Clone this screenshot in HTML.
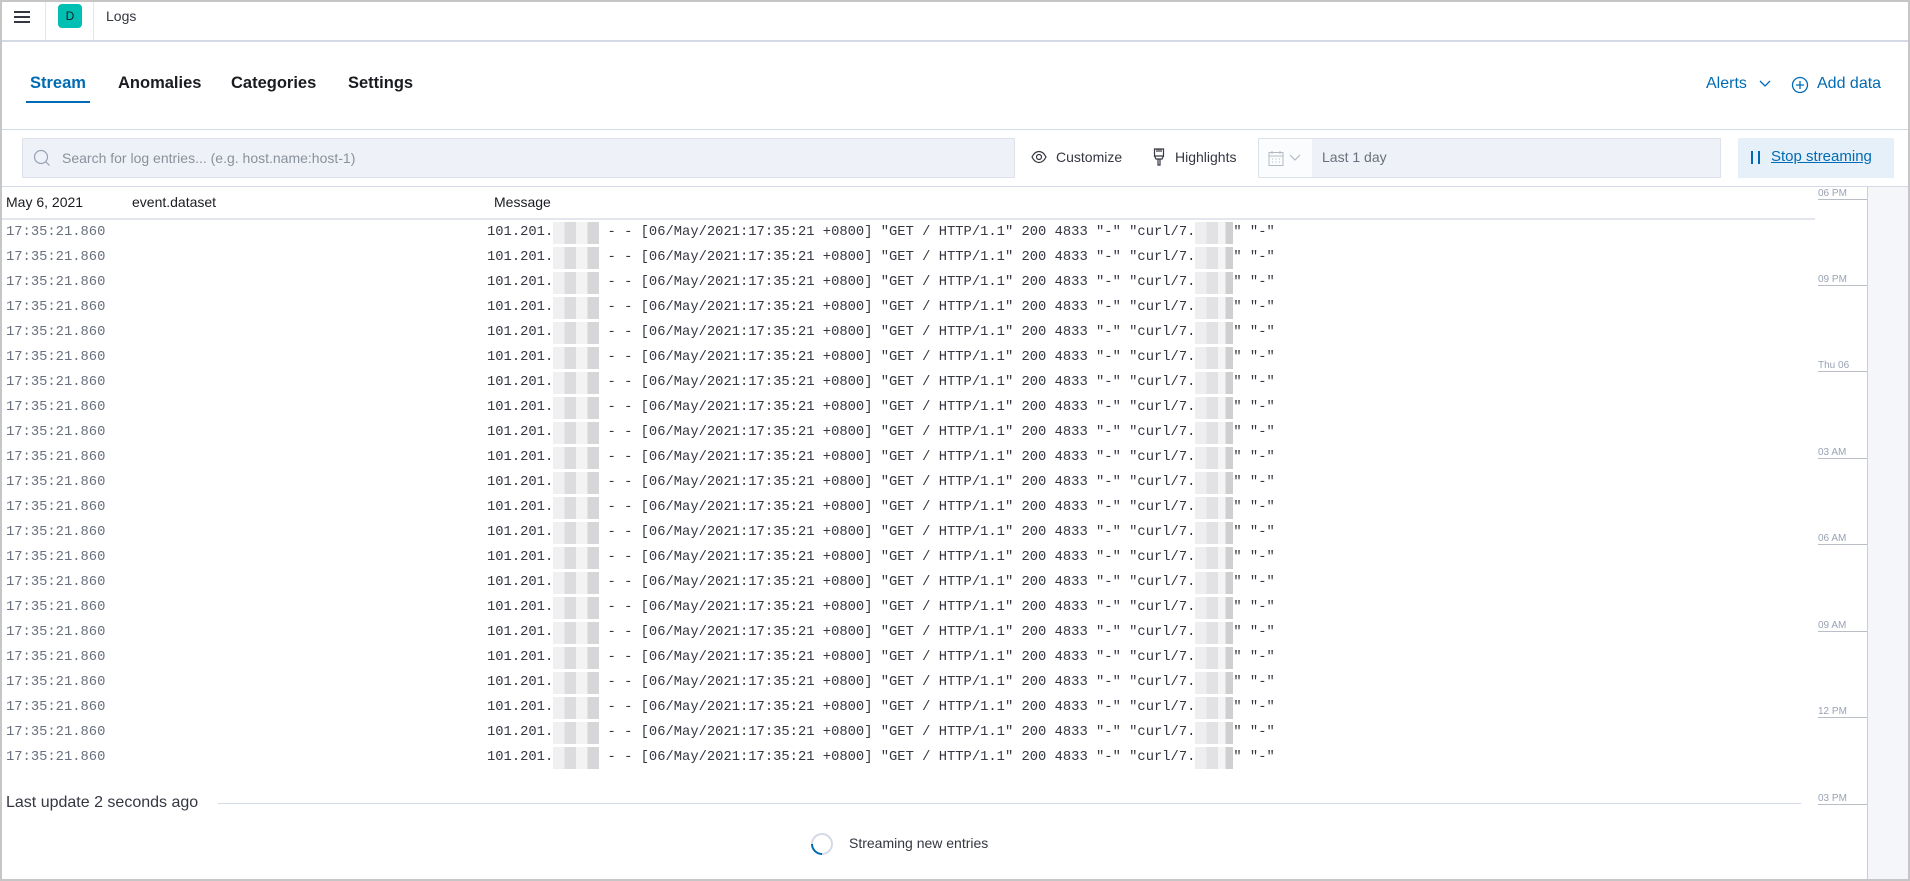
<!DOCTYPE html>
<html><head><meta charset="utf-8"><style>
*{box-sizing:border-box;margin:0;padding:0}
body{width:1910px;height:881px;overflow:hidden;background:#fff;font-family:"Liberation Sans",sans-serif;color:#343741;position:relative}
.a{position:absolute;white-space:nowrap}
.frame{position:absolute;left:0;top:0;width:1910px;height:881px;border:2px solid #c6c6c6;pointer-events:none;z-index:10}
.tab{font-size:16.5px;top:74px;color:#1a1c21}
.row{position:absolute;left:0;height:25px;font-family:"Liberation Mono",monospace;font-size:13.8px;line-height:25px}
.ts{position:absolute;left:6px;color:#69707d}
.msg{position:absolute;left:487px;color:#343741;white-space:pre}
.b1,.b2{display:inline-block;height:22px;margin-top:2px;vertical-align:top}
.b1{width:46px;background:linear-gradient(90deg,#f0f0f2 0 25%,#dcdcdf 25% 50%,#f3f3f4 50% 75%,#d6d6d9 75%)}
.b2{width:38px;background:linear-gradient(90deg,#eeeef0 0 30%,#e2e2e4 30% 60%,#f4f4f5 60% 80%,#cfcfd2 80%)}
.tl{position:absolute;left:1818px;font-size:10px;color:#98a2b3}
.tll{position:absolute;left:1818px;width:49px;height:1px;background:#b9bdc6}
</style></head><body>
<div class="frame"></div>
<svg class="a" style="left:13px;top:9px" width="18" height="16" viewBox="0 0 18 16"><path d="M1 3h16M1 8h16M1 13h16" stroke="#343741" stroke-width="2"/></svg>
<div class="a" style="left:45px;top:2px;width:1px;height:38px;background:#e3e6eb"></div>
<div class="a" style="left:58px;top:4px;width:24px;height:24px;border-radius:4px;background:#00bfb3;color:#1a1c21;font-size:12px;text-align:center;line-height:24px">D</div>
<div class="a" style="left:93px;top:2px;width:1px;height:38px;background:#e3e6eb"></div>
<div class="a" style="left:106px;top:8px;font-size:14px;color:#343741">Logs</div>
<div class="a" style="left:0;top:40px;width:1910px;height:2px;background:#d3dae6"></div>
<div class="a tab" style="left:30px;color:#006bb4;font-weight:bold">Stream</div>
<div class="a" style="left:26px;top:101px;width:64px;height:2px;background:#006bb4"></div>
<div class="a tab" style="left:118px;font-weight:bold">Anomalies</div>
<div class="a tab" style="left:231px;font-weight:bold">Categories</div>
<div class="a tab" style="left:348px;font-weight:bold">Settings</div>
<div class="a" style="left:1706px;top:75px;font-size:16px;color:#006bb4">Alerts</div>
<svg class="a" style="left:1759px;top:80px" width="12" height="8" viewBox="0 0 12 8"><path d="M1 1l5 5 5-5" stroke="#006bb4" fill="none" stroke-width="1.3"/></svg>
<svg class="a" style="left:1791px;top:76px" width="18" height="18" viewBox="0 0 18 18"><circle cx="9" cy="9" r="7.5" stroke="#006bb4" fill="none" stroke-width="1.3"/><path d="M9 5v8M5 9h8" stroke="#006bb4" stroke-width="1.3"/></svg>
<div class="a" style="left:1817px;top:75px;font-size:16px;color:#006bb4">Add data</div>
<div class="a" style="left:0;top:129px;width:1910px;height:1px;background:#d3dae6"></div>
<div class="a" style="left:22px;top:138px;width:993px;height:40px;background:#eef1f7;border:1px solid #dde2ea"></div>
<svg class="a" style="left:33px;top:149px" width="18" height="18" viewBox="0 0 18 18"><circle cx="8" cy="8" r="6.5" stroke="#98a2b3" fill="none" stroke-width="1.2"/><path d="M12.5 12.5l4 4" stroke="#98a2b3" stroke-width="1.2"/></svg>
<div class="a" style="left:62px;top:150px;font-size:14px;color:#8a919c">Search for log entries... (e.g. host.name:host-1)</div>
<svg class="a" style="left:1031px;top:150px" width="16" height="14" viewBox="0 0 16 14"><path d="M1 7C3 3 5.5 1.5 8 1.5S13 3 15 7C13 11 10.5 12.5 8 12.5S3 11 1 7z" stroke="#343741" fill="none" stroke-width="1.2"/><circle cx="8" cy="7" r="2.5" stroke="#343741" fill="none" stroke-width="1.2"/></svg>
<div class="a" style="left:1056px;top:149px;font-size:14px">Customize</div>
<svg class="a" style="left:1153px;top:148px" width="12" height="18" viewBox="0 0 12 18"><path d="M1.5 1h9v7h-9zM4 1v3M6 1v3M8 1v3M1.5 8l1.5 3h6l1.5-3M5 11v6h2v-6" stroke="#343741" fill="none" stroke-width="1.2"/></svg>
<div class="a" style="left:1175px;top:149px;font-size:14px">Highlights</div>
<div class="a" style="left:1258px;top:138px;width:463px;height:40px;background:#eef1f7;border:1px solid #dde2ea"></div>
<div class="a" style="left:1259px;top:139px;width:53px;height:38px;background:#fbfcfd"></div>
<svg class="a" style="left:1268px;top:150px" width="16" height="17" viewBox="0 0 16 17"><rect x="1" y="2.5" width="14" height="13" stroke="#b4bac3" fill="none"/><path d="M1 6h14M4 1v3M12 1v3" stroke="#b4bac3"/><path d="M4 9h1M7.5 9h1M11 9h1M4 12h1M7.5 12h1M11 12h1" stroke="#b4bac3"/></svg>
<svg class="a" style="left:1289px;top:154px" width="12" height="8" viewBox="0 0 12 8"><path d="M1 1l5 5 5-5" stroke="#b4bac3" fill="none" stroke-width="1.2"/></svg>
<div class="a" style="left:1322px;top:149px;font-size:14px;color:#69707d">Last 1 day</div>
<div class="a" style="left:1738px;top:138px;width:156px;height:40px;background:#e6f0f8"></div>
<div class="a" style="left:1751px;top:151px;width:1.5px;height:13px;background:#006bb4"></div>
<div class="a" style="left:1758px;top:151px;width:1.5px;height:13px;background:#006bb4"></div>
<div class="a" style="left:1771px;top:148px;font-size:15px;color:#006bb4;text-decoration:underline">Stop streaming</div>
<div class="a" style="left:0;top:186px;width:1910px;height:1px;background:#d3dae6"></div>
<div class="a" style="left:1867px;top:187px;width:1px;height:692px;background:#c9ccd3"></div>
<div class="a" style="left:1868px;top:187px;width:40px;height:692px;background:#f5f6fa"></div>
<div class="tl" style="top:188px">06 PM</div><div class="tll" style="top:199px"></div>
<div class="tl" style="top:274px">09 PM</div><div class="tll" style="top:285px"></div>
<div class="tl" style="top:360px">Thu 06</div><div class="tll" style="top:371px"></div>
<div class="tl" style="top:447px">03 AM</div><div class="tll" style="top:458px"></div>
<div class="tl" style="top:533px">06 AM</div><div class="tll" style="top:544px"></div>
<div class="tl" style="top:620px">09 AM</div><div class="tll" style="top:631px"></div>
<div class="tl" style="top:706px">12 PM</div><div class="tll" style="top:717px"></div>
<div class="tl" style="top:793px">03 PM</div><div class="tll" style="top:804px"></div>
<div class="a" style="left:6px;top:194px;font-size:14px;color:#1a1c21">May 6, 2021</div>
<div class="a" style="left:132px;top:194px;font-size:14px;color:#1a1c21">event.dataset</div>
<div class="a" style="left:494px;top:194px;font-size:14px;color:#1a1c21">Message</div>
<div class="a" style="left:0;top:218px;width:1815px;height:2px;background:#e3e6ec"></div>
<div class="row" style="top:220px"><span class="ts">17:35:21.860</span><span class="msg">101.201.<span class="b1"></span> - - [06/May/2021:17:35:21 +0800] "GET / HTTP/1.1" 200 4833 "-" "curl/7.<span class="b2"></span>" "-"</span></div>
<div class="row" style="top:245px"><span class="ts">17:35:21.860</span><span class="msg">101.201.<span class="b1"></span> - - [06/May/2021:17:35:21 +0800] "GET / HTTP/1.1" 200 4833 "-" "curl/7.<span class="b2"></span>" "-"</span></div>
<div class="row" style="top:270px"><span class="ts">17:35:21.860</span><span class="msg">101.201.<span class="b1"></span> - - [06/May/2021:17:35:21 +0800] "GET / HTTP/1.1" 200 4833 "-" "curl/7.<span class="b2"></span>" "-"</span></div>
<div class="row" style="top:295px"><span class="ts">17:35:21.860</span><span class="msg">101.201.<span class="b1"></span> - - [06/May/2021:17:35:21 +0800] "GET / HTTP/1.1" 200 4833 "-" "curl/7.<span class="b2"></span>" "-"</span></div>
<div class="row" style="top:320px"><span class="ts">17:35:21.860</span><span class="msg">101.201.<span class="b1"></span> - - [06/May/2021:17:35:21 +0800] "GET / HTTP/1.1" 200 4833 "-" "curl/7.<span class="b2"></span>" "-"</span></div>
<div class="row" style="top:345px"><span class="ts">17:35:21.860</span><span class="msg">101.201.<span class="b1"></span> - - [06/May/2021:17:35:21 +0800] "GET / HTTP/1.1" 200 4833 "-" "curl/7.<span class="b2"></span>" "-"</span></div>
<div class="row" style="top:370px"><span class="ts">17:35:21.860</span><span class="msg">101.201.<span class="b1"></span> - - [06/May/2021:17:35:21 +0800] "GET / HTTP/1.1" 200 4833 "-" "curl/7.<span class="b2"></span>" "-"</span></div>
<div class="row" style="top:395px"><span class="ts">17:35:21.860</span><span class="msg">101.201.<span class="b1"></span> - - [06/May/2021:17:35:21 +0800] "GET / HTTP/1.1" 200 4833 "-" "curl/7.<span class="b2"></span>" "-"</span></div>
<div class="row" style="top:420px"><span class="ts">17:35:21.860</span><span class="msg">101.201.<span class="b1"></span> - - [06/May/2021:17:35:21 +0800] "GET / HTTP/1.1" 200 4833 "-" "curl/7.<span class="b2"></span>" "-"</span></div>
<div class="row" style="top:445px"><span class="ts">17:35:21.860</span><span class="msg">101.201.<span class="b1"></span> - - [06/May/2021:17:35:21 +0800] "GET / HTTP/1.1" 200 4833 "-" "curl/7.<span class="b2"></span>" "-"</span></div>
<div class="row" style="top:470px"><span class="ts">17:35:21.860</span><span class="msg">101.201.<span class="b1"></span> - - [06/May/2021:17:35:21 +0800] "GET / HTTP/1.1" 200 4833 "-" "curl/7.<span class="b2"></span>" "-"</span></div>
<div class="row" style="top:495px"><span class="ts">17:35:21.860</span><span class="msg">101.201.<span class="b1"></span> - - [06/May/2021:17:35:21 +0800] "GET / HTTP/1.1" 200 4833 "-" "curl/7.<span class="b2"></span>" "-"</span></div>
<div class="row" style="top:520px"><span class="ts">17:35:21.860</span><span class="msg">101.201.<span class="b1"></span> - - [06/May/2021:17:35:21 +0800] "GET / HTTP/1.1" 200 4833 "-" "curl/7.<span class="b2"></span>" "-"</span></div>
<div class="row" style="top:545px"><span class="ts">17:35:21.860</span><span class="msg">101.201.<span class="b1"></span> - - [06/May/2021:17:35:21 +0800] "GET / HTTP/1.1" 200 4833 "-" "curl/7.<span class="b2"></span>" "-"</span></div>
<div class="row" style="top:570px"><span class="ts">17:35:21.860</span><span class="msg">101.201.<span class="b1"></span> - - [06/May/2021:17:35:21 +0800] "GET / HTTP/1.1" 200 4833 "-" "curl/7.<span class="b2"></span>" "-"</span></div>
<div class="row" style="top:595px"><span class="ts">17:35:21.860</span><span class="msg">101.201.<span class="b1"></span> - - [06/May/2021:17:35:21 +0800] "GET / HTTP/1.1" 200 4833 "-" "curl/7.<span class="b2"></span>" "-"</span></div>
<div class="row" style="top:620px"><span class="ts">17:35:21.860</span><span class="msg">101.201.<span class="b1"></span> - - [06/May/2021:17:35:21 +0800] "GET / HTTP/1.1" 200 4833 "-" "curl/7.<span class="b2"></span>" "-"</span></div>
<div class="row" style="top:645px"><span class="ts">17:35:21.860</span><span class="msg">101.201.<span class="b1"></span> - - [06/May/2021:17:35:21 +0800] "GET / HTTP/1.1" 200 4833 "-" "curl/7.<span class="b2"></span>" "-"</span></div>
<div class="row" style="top:670px"><span class="ts">17:35:21.860</span><span class="msg">101.201.<span class="b1"></span> - - [06/May/2021:17:35:21 +0800] "GET / HTTP/1.1" 200 4833 "-" "curl/7.<span class="b2"></span>" "-"</span></div>
<div class="row" style="top:695px"><span class="ts">17:35:21.860</span><span class="msg">101.201.<span class="b1"></span> - - [06/May/2021:17:35:21 +0800] "GET / HTTP/1.1" 200 4833 "-" "curl/7.<span class="b2"></span>" "-"</span></div>
<div class="row" style="top:720px"><span class="ts">17:35:21.860</span><span class="msg">101.201.<span class="b1"></span> - - [06/May/2021:17:35:21 +0800] "GET / HTTP/1.1" 200 4833 "-" "curl/7.<span class="b2"></span>" "-"</span></div>
<div class="row" style="top:745px"><span class="ts">17:35:21.860</span><span class="msg">101.201.<span class="b1"></span> - - [06/May/2021:17:35:21 +0800] "GET / HTTP/1.1" 200 4833 "-" "curl/7.<span class="b2"></span>" "-"</span></div>
<div class="a" style="left:6px;top:794px;font-size:16px;color:#343741">Last update 2 seconds ago</div>
<div class="a" style="left:218px;top:803px;width:1583px;height:1px;background:#d3dae6"></div>
<svg class="a" style="left:810px;top:832px" width="24" height="24" viewBox="0 0 24 24"><circle cx="12" cy="12" r="10" stroke="#d3dae6" fill="none" stroke-width="2"/><path d="M12 22A10 10 0 0 1 2 12" stroke="#006bb4" fill="none" stroke-width="2"/></svg>
<div class="a" style="left:849px;top:835px;font-size:14px;color:#343741">Streaming new entries</div>
</body></html>
